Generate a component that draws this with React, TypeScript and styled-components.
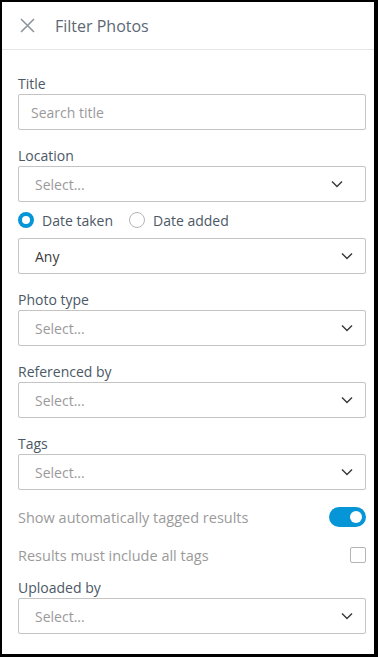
import React from 'react';
import styled, { createGlobalStyle } from 'styled-components';

const GlobalStyle = createGlobalStyle`
    html, body {
        margin: 0;
        padding: 0;
        background: #ffffff;
    }
    body {
        font-family: "Open Sans", "Noto Sans", sans-serif;
        -webkit-font-smoothing: antialiased;
    }
    * {
        box-sizing: border-box;
    }
`;

const colorBlue = '#0696d7';
const colorLabel = '#4b5866';
const colorText = '#3c3c3c';
const colorMuted = '#9a9a9a';
const colorBorder = '#c4c4c4';

// ---------------- <Panel /> ---------------

const Panel = styled.div`
    width: 378px;
    height: 657px;
    border-style: solid;
    border-color: #000000;
    border-width: 2px 4px 3px 2px;
    background: #ffffff;
    display: flex;
    flex-direction: column;
    overflow: hidden;
`;

// ---------------- <Header /> ---------------

const Header = styled.header`
    height: 48px;
    flex-shrink: 0;
    display: flex;
    align-items: center;
    padding: 0 0 0 17px;
    border-bottom: 1px solid #e6e6e6;
`;

const CloseButton = styled.button`
    border: none;
    background: none;
    padding: 0;
    width: 16px;
    height: 16px;
    display: flex;
    align-items: center;
    justify-content: center;
    cursor: pointer;
    margin-right: 20px;
`;

const HeaderTitle = styled.h1`
    margin: 0;
    font-size: 16px;
    font-weight: 400;
    color: #5c6875;
`;

// ---------------- <Body /> ---------------

const Body = styled.div`
    padding: 24px 8px 0 16px;
    display: flex;
    flex-direction: column;
`;

const Field = styled.div<{ $flush?: boolean }>`
    display: flex;
    flex-direction: column;
    margin-bottom: ${p => (p.$flush ? 0 : 16)}px;
`;

const Label = styled.label`
    font-size: 14px;
    line-height: 20px;
    color: ${colorLabel};
`;

const TextInput = styled.input`
    height: 36px;
    width: 100%;
    border: 1px solid ${colorBorder};
    border-radius: 2px;
    padding: 0 12px;
    font-family: inherit;
    font-size: 14px;
    color: ${colorText};
    outline: none;

    &::placeholder {
        color: ${colorMuted};
    }
`;

const SelectBox = styled.div<{ $chevronInset: number }>`
    height: 36px;
    border: 1px solid ${colorBorder};
    border-radius: 2px;
    display: flex;
    align-items: center;
    justify-content: space-between;
    padding: 0 ${p => p.$chevronInset}px 0 16px;
    font-size: 14px;
`;

const SelectValue = styled.span<{ $placeholder: boolean }>`
    color: ${p => (p.$placeholder ? colorMuted : colorText)};
`;

// ---------------- <RadioGroup /> ---------------

const RadioRow = styled.div`
    height: 36px;
    display: flex;
    align-items: center;
    gap: 16px;
`;

const RadioOption = styled.label`
    display: flex;
    align-items: center;
    gap: 8px;
    font-size: 14px;
    color: ${colorLabel};
`;

const RadioDot = styled.span<{ $checked: boolean }>`
    width: 16px;
    height: 16px;
    border-radius: 50%;
    border: ${p => (p.$checked ? `4px solid ${colorBlue}` : '1px solid #b5b5b5')};
    background: #ffffff;
    display: inline-block;
`;

// ---------------- <OptionRow /> ---------------

const OptionRows = styled.div`
    margin: -8px 0 4px;
`;

const OptionRow = styled.div`
    height: 38px;
    display: flex;
    align-items: center;
    justify-content: space-between;
    font-size: 14.5px;
    color: ${colorMuted};
`;

const Toggle = styled.span<{ $on: boolean }>`
    width: 37px;
    height: 20px;
    border-radius: 10px;
    background: ${p => (p.$on ? colorBlue : '#c4c4c4')};
    display: flex;
    align-items: center;
    justify-content: ${p => (p.$on ? 'flex-end' : 'flex-start')};
    padding: 0 4px;

    &::after {
        content: '';
        width: 12px;
        height: 12px;
        border-radius: 50%;
        background: #ffffff;
    }
`;

const Checkbox = styled.span`
    width: 16px;
    height: 16px;
    border: 1px solid #b5b5b5;
    border-radius: 2px;
    background: #ffffff;
`;

const Chevron: React.FC = () => (
    <svg width="12" height="8" viewBox="0 0 12 8" fill="none">
        <path d="M1 1.5 L6 6.5 L11 1.5" stroke="#3c3c3c" strokeWidth="1.5" />
    </svg>
);

const Select: React.FC<{ value?: string; inset?: number }> = ({ value, inset = 12 }) => (
    <SelectBox $chevronInset={inset}>
        <SelectValue $placeholder={!value}>{value || 'Select...'}</SelectValue>
        <Chevron />
    </SelectBox>
);

export default function App() {
    return (
        <>
            <GlobalStyle />
            <Panel>
                <Header>
                    <CloseButton aria-label="Close">
                        <svg width="15" height="15" viewBox="0 0 15 15">
                            <path d="M1 1 L14 14 M14 1 L1 14" stroke="#8d96a0" strokeWidth="1.6" />
                        </svg>
                    </CloseButton>
                    <HeaderTitle>Filter Photos</HeaderTitle>
                </Header>
                <Body>
                    <Field>
                        <Label>Title</Label>
                        <TextInput placeholder="Search title" />
                    </Field>
                    <Field $flush>
                        <Label>Location</Label>
                        <Select inset={22} />
                    </Field>
                    <RadioRow>
                        <RadioOption>
                            <RadioDot $checked />
                            Date taken
                        </RadioOption>
                        <RadioOption>
                            <RadioDot $checked={false} />
                            Date added
                        </RadioOption>
                    </RadioRow>
                    <Field>
                        <Select value="Any" />
                    </Field>
                    <Field>
                        <Label>Photo type</Label>
                        <Select />
                    </Field>
                    <Field>
                        <Label>Referenced by</Label>
                        <Select />
                    </Field>
                    <Field>
                        <Label>Tags</Label>
                        <Select />
                    </Field>
                    <OptionRows>
                        <OptionRow>
                            Show automatically tagged results
                            <Toggle $on />
                        </OptionRow>
                        <OptionRow>
                            Results must include all tags
                            <Checkbox />
                        </OptionRow>
                    </OptionRows>
                    <Field>
                        <Label>Uploaded by</Label>
                        <Select />
                    </Field>
                </Body>
            </Panel>
        </>
    );
}
